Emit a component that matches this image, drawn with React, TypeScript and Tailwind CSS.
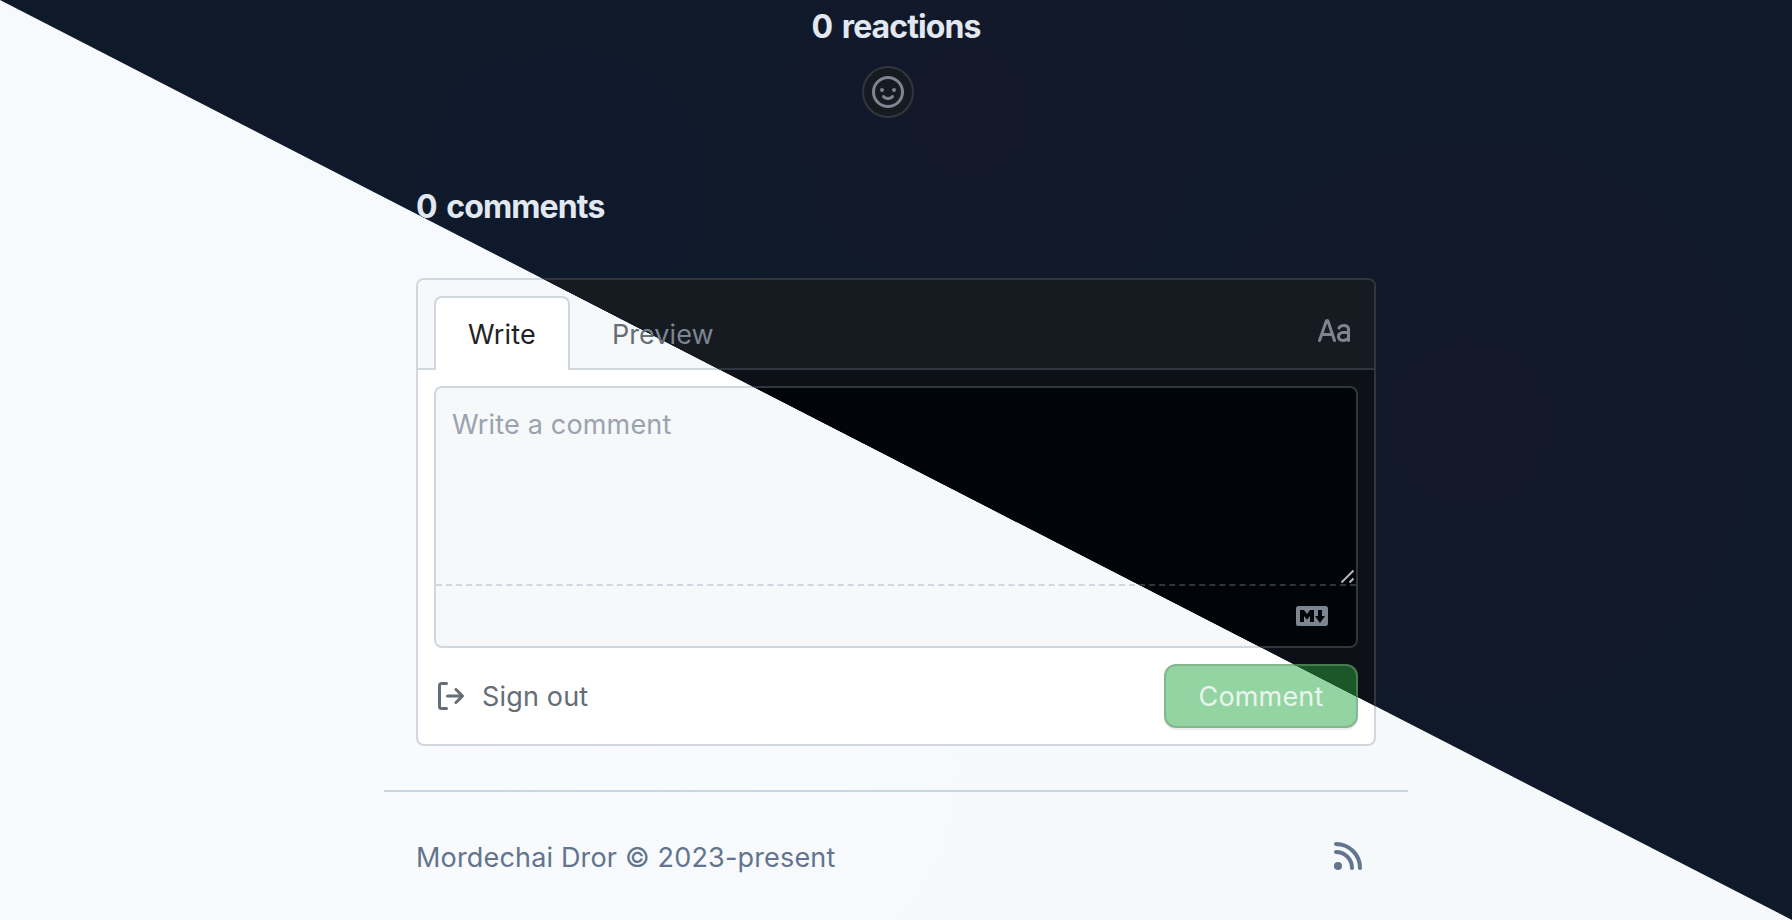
const themes = {
  light: {
    page: "bg-[#f6fafd] bg-[radial-gradient(circle_at_90%_100%,#f5f9fa_0%,transparent_45%),radial-gradient(circle_at_15%_100%,#f9fafc_0%,transparent_35%),radial-gradient(circle_at_45%_85%,#f8fafc_0%,transparent_25%)]",
    heading: "text-slate-800",
    border: "border-[#d0d7de]",
    panel: "bg-white",
    header: "bg-[#f6f8fa]",
    input: "bg-[#f6f8fa]",
    text: "text-[#1f2328]",
    muted: "text-[#656d76]",
    placeholder: "text-[#9aa3af]",
    button: "bg-[#94d3a2] border-[#83b78e] text-[#e9f6ec]",
    rule: "border-slate-300",
    footer: "text-slate-500",
  },
  dark: {
    page: "bg-[#101929] bg-[radial-gradient(circle_at_54%_12%,#131829_0%,transparent_20%),radial-gradient(circle_at_82%_46%,#131829_0%,transparent_20%),radial-gradient(circle_at_32%_20%,#0e1a2c_0%,transparent_35%)]",
    heading: "text-slate-200",
    border: "border-[#30363d]",
    panel: "bg-[#0d1117]",
    header: "bg-[#161b22]",
    input: "bg-[#010409]",
    text: "text-[#e6edf3]",
    muted: "text-[#7d8590]",
    placeholder: "text-[#6e7681]",
    button: "bg-[#1b5729] border-[#467c50] text-[#8fa596]",
    rule: "border-slate-700",
    footer: "text-slate-400",
  },
};

type Theme = (typeof themes)["light"];

const icons = {
  smiley:
    "M8 0a8 8 0 1 1 0 16A8 8 0 0 1 8 0ZM1.5 8a6.5 6.5 0 1 0 13 0 6.5 6.5 0 0 0-13 0Zm3.82 1.636a.75.75 0 0 1 1.038.175l.007.009c.103.118.22.222.35.31.264.178.683.37 1.285.37.602 0 1.02-.192 1.285-.371.13-.088.247-.192.35-.31l.007-.008a.75.75 0 0 1 1.222.87l-.022-.015c.02.013.021.015.021.015v.001l-.001.002-.002.003-.005.007-.014.019a2.066 2.066 0 0 1-.184.213c-.16.166-.338.316-.53.445-.63.418-1.37.638-2.127.629-.946 0-1.652-.308-2.126-.63a3.331 3.331 0 0 1-.715-.657l-.014-.02-.005-.006-.002-.003v-.002h-.001l.613-.432-.614.43a.75.75 0 0 1 .183-1.044ZM12 7a1 1 0 1 1-2 0 1 1 0 0 1 2 0ZM5 8a1 1 0 1 1 0-2 1 1 0 0 1 0 2Z",
  typography:
    "M6.21 8.5L4.574 3.594 2.857 8.5H6.21zm.5 1.5l.829 2.487a.75.75 0 001.423-.474L5.735 2.332a1.216 1.216 0 00-2.302-.018l-3.39 9.688a.75.75 0 001.415.496L2.332 10H6.71zm3.13-4.358C10.53 4.374 11.87 4 13 4c1.5 0 3 .939 3 2.601v5.649a.75.75 0 01-1.448.275C13.995 12.82 13.3 13 12.5 13c-.77 0-1.514-.231-2.078-.709-.577-.488-.922-1.199-.922-2.041 0-.694.265-1.411.887-1.944C11 7.78 11.88 7.5 13 7.5h1.5v-.899c0-.54-.5-1.101-1.5-1.101-.869 0-1.528.282-1.84.858a.75.75 0 11-1.32-.716zM14.5 9H13c-.881 0-1.375.22-1.637.444-.253.217-.363.5-.363.806 0 .408.155.697.39.896.249.21.63.354 1.11.354.732 0 1.26-.209 1.588-.449.35-.257.412-.495.412-.551V9z",
  markdown:
    "M14.85 3H1.15C.52 3 0 3.52 0 4.15v7.69C0 12.48.52 13 1.15 13h13.69c.64 0 1.15-.52 1.15-1.15v-7.7C16 3.52 15.48 3 14.85 3zM9 11H7V8L5.5 9.92 4 8v3H2V5h2l1.5 2L7 5h2v6zm2.99.5L9.5 8H11V5h2v3h1.5l-2.51 3.5z",
  signOut:
    "M2 2.75C2 1.784 2.784 1 3.75 1h2.5a.75.75 0 0 1 0 1.5h-2.5a.25.25 0 0 0-.25.25v10.5c0 .138.112.25.25.25h2.5a.75.75 0 0 1 0 1.5h-2.5A1.75 1.75 0 0 1 2 13.25Zm10.44 4.5-1.97-1.97a.749.749 0 0 1 .326-1.275.749.749 0 0 1 .734.215l3.25 3.25a.75.75 0 0 1 0 1.06l-3.25 3.25a.749.749 0 0 1-1.275-.326.749.749 0 0 1 .215-.734l1.97-1.97H6.75a.75.75 0 0 1 0-1.5Z",
};

function Icon({ name, className = "" }: { name: keyof typeof icons; className?: string }) {
  return (
    <svg viewBox="0 0 16 16" className={`size-8 shrink-0 ${className}`} fill="currentColor">
      <path fillRule="evenodd" d={icons[name]} />
    </svg>
  );
}

function RssIcon() {
  return (
    <svg viewBox="0 0 28 28" className="size-7" fill="none" stroke="currentColor" strokeWidth="4" strokeLinecap="round">
      <circle cx="4" cy="24" r="4" fill="currentColor" stroke="none" />
      <path d="M2 10a16 16 0 0 1 16 16M2 2a24 24 0 0 1 24 24" />
    </svg>
  );
}

function Page({ t }: { t: Theme }) {
  return (
    <div className={`flex h-[920px] w-[1792px] flex-col items-center overflow-hidden font-['Inter',sans-serif] text-[27px] leading-10 tracking-[0.17px] ${t.page}`}>
      <div className="flex h-[278px] w-[960px] flex-col">
        <h2 className={`mt-[7px] text-center text-[32px] font-bold tracking-[-0.9px] [word-spacing:3px] ${t.heading}`}>0 reactions</h2>
        <div className={`mt-[19px] ml-[446px] flex size-[52px] items-center justify-center rounded-full border-2 ${t.border} ${t.header} ${t.muted}`}>
          <Icon name="smiley" />
        </div>
        <h2 className={`mt-[69px] text-[32px] font-bold tracking-[-0.9px] [word-spacing:3px] ${t.heading}`}>0 comments</h2>
      </div>

      <section className={`flex h-[468px] w-[960px] flex-col rounded-lg border-2 ${t.border} ${t.panel}`}>
        <div className={`flex h-[90px] shrink-0 items-end rounded-t-md border-b-2 px-4 ${t.border} ${t.header}`}>
          <div className={`-mb-0.5 flex h-[74px] w-[136px] items-center justify-center rounded-t-lg border-2 border-b-0 pt-0.5 ${t.border} ${t.panel} ${t.text}`}>
            Write
          </div>
          <div className={`flex h-[72px] items-center pt-1.5 pl-[42px] tracking-[0.05px] ${t.muted}`}>Preview</div>
          <Icon name="typography" className={`mr-2 mb-5 ml-auto ${t.muted}`} />
        </div>

        <div className={`mx-4 mt-4 flex h-[262px] shrink-0 flex-col rounded-lg border-2 ${t.border} ${t.input}`}>
          <div className={`relative h-[198px] border-b-2 border-dashed px-4 pt-[17px] ${t.border} ${t.placeholder}`}>
            Write a comment
            <svg viewBox="0 0 14 14" className="absolute right-0.5 bottom-0 size-3.5 text-[#b4b5b6]" fill="none" stroke="currentColor" strokeWidth="2">
              <path d="M1.5 12.5 13.5 .5M9.5 12.5l4-4" />
            </svg>
          </div>
          <div className={`flex h-[60px] items-center justify-end pr-7 ${t.muted}`}>
            <Icon name="markdown" />
          </div>
        </div>

        <div className="flex h-24 items-center justify-between px-4">
          <div className={`flex items-center gap-4 ${t.muted}`}>
            <Icon name="signOut" />
            <span className="pt-0.5">Sign out</span>
          </div>
          <div className={`flex h-16 w-[194px] items-center justify-center rounded-xl border-2 pt-0.5 shadow-[0_2px_0_rgba(31,35,40,0.08)] ${t.button}`}>
            Comment
          </div>
        </div>
      </section>

      <footer className={`mt-11 flex w-[1024px] items-start justify-between border-t-2 pt-[46px] pr-[46px] pl-8 ${t.rule} ${t.footer}`}>
        <span>Mordechai Dror © 2023-present</span>
        <div className="pt-1">
          <RssIcon />
        </div>
      </footer>
    </div>
  );
}

export default function App() {
  return (
    <main className="relative h-[920px] w-[1792px] overflow-hidden">
      <Page t={themes.light} />
      <div aria-hidden="true" className="absolute inset-0 [clip-path:polygon(0_0,100%_0,100%_100%)]">
        <Page t={themes.dark} />
      </div>
    </main>
  );
}
